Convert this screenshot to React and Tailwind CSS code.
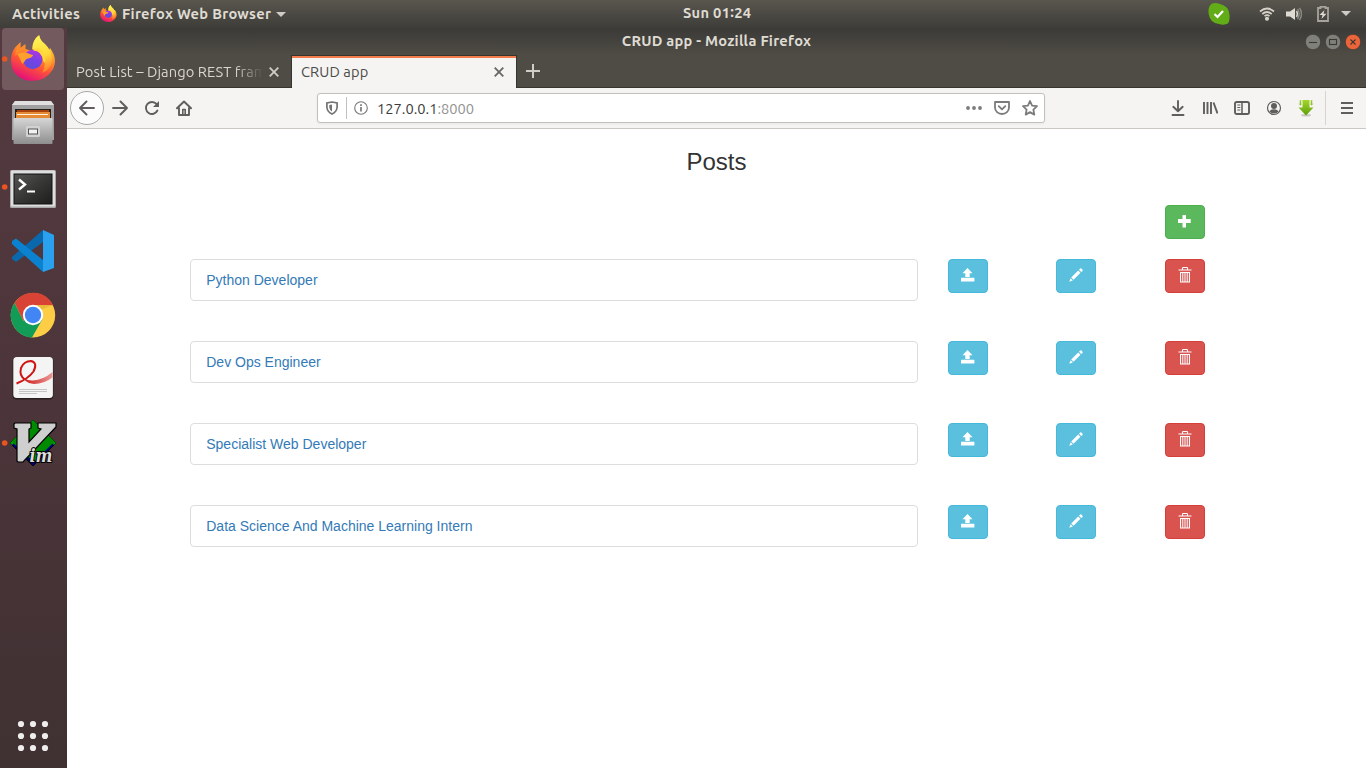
import React from "react";

const UI = "font-['Ubuntu','Noto_Sans',sans-serif]";

function FirefoxMark({ id, className, ...rest }) {
  return (
    <svg viewBox="0 0 46 46" className={className} {...rest}>
      <defs>
        <linearGradient id={id + "a"} x1="0.8" y1="0" x2="0.35" y2="1">
          <stop offset="0" stopColor="#fff44f" />
          <stop offset="0.35" stopColor="#ffa52a" />
          <stop offset="0.65" stopColor="#ff5536" />
          <stop offset="1" stopColor="#e3107a" />
        </linearGradient>
        <linearGradient id={id + "b"} x1="0.7" y1="0" x2="0.3" y2="1">
          <stop offset="0" stopColor="#b833e1" />
          <stop offset="0.5" stopColor="#7542e5" />
          <stop offset="1" stopColor="#5b4fd8" />
        </linearGradient>
        <linearGradient id={id + "c"} x1="0.4" y1="0" x2="0.6" y2="1">
          <stop offset="0" stopColor="#fff556" />
          <stop offset="0.55" stopColor="#ffd83a" />
          <stop offset="1" stopColor="#ff7d2b" />
        </linearGradient>
      </defs>
      <path d="M10 7 L10 13 L15 9 L15 14 L22 16 L23 8 Q25 2 29 0 Q30 6 35 9 L39 15 L40 13 Q48 24 43 34 Q36 46 23 46 Q8 46 2 34 Q-2 21 5 12 Q7 10 10 7Z" fill={`url(#${id}a)`} />
      <path d="M22 14 Q22 5 29 0 Q30 6 35 9 Q42 15 42 25 Q41 35 32 38 Q37 29 33 22 Q29 15 22 14Z" fill={`url(#${id}c)`} />
      <circle cx="22.5" cy="24.5" r="9.8" fill={`url(#${id}b)`} />
      <path d="M23 15.5 Q32 16 33 26 L35 28 Q36 17 29 13 Q25 12 23 15.5Z" fill="#ffd83a" />
      <path d="M7 19 Q13 16 17 18 Q21 20 23 20 Q22 23 16 24 Q14 27 12 29 Q10 25 7 19Z" fill="#ffa02c" />
      <path d="M10 7 L10 13 L15 9 L15 15 Q9 16 5 21 Q4 14 10 7Z" fill="#ff8b2b" />
    </svg>
  );
}

function DockCell({ running, children }) {
  return (
    <svg viewBox="0 0 67 64" className="block h-[64px] w-[67px] shrink-0">
      {children}
      {running && <circle cx="4.7" cy="31" r="2.8" fill="#e95420" />}
    </svg>
  );
}

function Dock() {
  return (
    <aside className="flex w-[67px] shrink-0 flex-col justify-between bg-linear-to-b from-[#543a40] via-[#4c353a] to-[#3f3132]">
      <div className="flex flex-col">
        <DockCell running>
          <rect x="2" y="0" width="62" height="62" rx="4" fill="#735a5f" />
          <FirefoxMark id="ffd" x="10.5" y="7" width="45.5" height="46" />
        </DockCell>
        <DockCell>
          <defs>
            <linearGradient id="cab" x1="0" y1="0" x2="0" y2="1">
              <stop offset="0" stopColor="#d6d6d6" />
              <stop offset="1" stopColor="#8e8e8e" />
            </linearGradient>
          </defs>
          <path d="M15 9h36l3 4v35H12V13z" fill="#a0a0a0" />
          <path d="M15 9h36l3 4H12z" fill="#e0e0e0" />
          <rect x="15" y="17" width="36" height="9" fill="#25201e" />
          <rect x="17" y="18" width="32" height="3" fill="#a8410c" />
          <rect x="16" y="20" width="34" height="6" fill="#e58a35" />
          <rect x="17" y="22" width="31" height="1" fill="#fff1df" />
          <rect x="13.5" y="26" width="39" height="26" rx="1" fill="url(#cab)" />
          <rect x="26" y="34" width="14" height="11" rx="1.5" fill="#d2d2d2" />
          <rect x="28.5" y="37" width="9" height="5" fill="#f2f2f2" stroke="#555" />
        </DockCell>
        <DockCell running>
          <defs>
            <linearGradient id="trm" x1="0" y1="0" x2="1" y2="1">
              <stop offset="0" stopColor="#555553" />
              <stop offset="0.5" stopColor="#373735" />
              <stop offset="1" stopColor="#1d1d1c" />
            </linearGradient>
          </defs>
          <rect x="10" y="14" width="46" height="38" rx="1.5" fill="#a8a8a8" />
          <rect x="11" y="14.5" width="44" height="36" rx="1" fill="#dedede" />
          <rect x="14" y="18" width="38" height="30" fill="url(#trm)" stroke="#111" />
          <path d="M19 23.5l6 5-6 5" fill="none" stroke="#fff" strokeWidth="2.4" />
          <path d="M27 35.5h8" stroke="#fff" strokeWidth="2" />
        </DockCell>
        <DockCell>
          <path d="M12 37l31-27v12L16 42l-4-3z" fill="#0a69ad" />
          <path d="M12 24v-3l4-2.5L43 40v12L12 24z" fill="#0b82cf" />
          <path d="M43 10l11 5v33l-11 4z" fill="#2aa1ef" />
        </DockCell>
        <DockCell>
          <circle cx="33" cy="31.2" r="22.2" fill="#fdce45" />
          <path d="M14.6 18.7A22.2 22.2 0 0 0 32 53.4L42.5 35 33 31 23.4 36.7z" fill="#119d58" />
          <path d="M14.6 18.7A22.2 22.2 0 0 1 53.2 21.3H33L23.4 36.7z" fill="#d94335" />
          <path d="M33 21.3h20l-14 5z" fill="#e9bb38" />
          <circle cx="33" cy="31" r="10.2" fill="#fff" />
          <circle cx="33" cy="31" r="8.2" fill="#4285f4" />
        </DockCell>
        <DockCell>
          <defs>
            <linearGradient id="pdf" x1="0" y1="0" x2="1" y2="0">
              <stop offset="0" stopColor="#cc0b0b" />
              <stop offset="1" stopColor="#e99a98" />
            </linearGradient>
          </defs>
          <rect x="12.5" y="9.5" width="41" height="42" rx="4" fill="#28201f" />
          <rect x="13.3" y="9" width="39.6" height="41" rx="3.5" fill="#f4f4f4" />
          <path d="M16.5 35.5Q28 31 33.500 23.500Q38 14.500 31 13Q24 13 21 20Q19 28 25 31.500" fill="none" stroke="#cf1414" strokeWidth="2" />
          <path d="M20.5 24Q23 33 33 32.500T52.500 24V29.500Q44 36 34 36T20.500 24z" fill="url(#pdf)" />
          <path d="M19 41.5h28M19 43.5h28M19 45.5h18" stroke="#c4c4c4" strokeWidth="1" />
        </DockCell>
        <DockCell running>
          <path d="M33 8L56 31 33 54 10 31z" fill="#000080" stroke="#000" />
          <path d="M33 8L56 31 54 33 33 12 12 33 10 31z" fill="#00a000" />
          <path d="M33 9L54 30 34 50 12 30z" fill="#008a00" />
          <path d="M15 11h16v5l-2 1v13l12-13-3-1v-5h18v4L23 50h-5l-1-1V17l-3-1v-4z" fill="#cfcfcf" stroke="#000" strokeWidth="1.2" />
          <text x="29.5" y="49.5" textLength="23" lengthAdjust="spacingAndGlyphs" fontFamily="DejaVu Serif" fontStyle="italic" fontWeight="700" fontSize="18" fill="#dcdcdc" stroke="#000" strokeWidth="2" paintOrder="stroke">im</text>
        </DockCell>
      </div>
      <svg viewBox="0 0 67 64" className="block h-[64px] w-[67px] fill-[#eeeeec]">
        {[20, 32, 44].map((y) => [21, 33, 45].map((x) => <circle key={x + "-" + y} cx={x} cy={y} r="3.1" />))}
      </svg>
    </aside>
  );
}

function TopBar() {
  return (
    <header className={`flex h-[28px] shrink-0 items-center bg-linear-to-b from-[#59564e] to-[#3e3d39] text-[14.667px] font-bold tracking-[0.29px] text-[#dfdbd2] ${UI}`}>
      <div className="flex w-[683px] items-center pl-[12px]">
        <span className="w-[68px] whitespace-nowrap">Activities</span>
        <FirefoxMark id="fft" className="mb-[2px] ml-[20px] h-[17px] w-[17px]" />
        <span className="ml-[5px] w-[149px] whitespace-nowrap">Firefox Web Browser</span>
        <svg className="ml-[5px] h-[5px] w-[10px] fill-[#cfccc5]" viewBox="0 0 10 5"><path d="M0 0h10L5 5z" /></svg>
      </div>
      <span className="mb-[2px] whitespace-nowrap leading-[22px]">Sun 01<span className="align-[1px] leading-none">:</span>24</span>
      <div className="mb-[1px] flex flex-1 items-center justify-end pr-[15px]">
        <svg className="h-[22px] w-[22px]" viewBox="0 0 22 22">
          <path d="M4 0.5Q8-.5 12 1Q21 3 21.5 12Q22 18 20 20.5Q16 22.5 11 21Q2 20 .7 11Q-.5 4 4 .5z" fill="#62ac17" />
          <path d="M6.5 11l3 3L15 8" fill="none" stroke="#fff" strokeWidth="2.2" />
        </svg>
        <svg className="ml-[29px] h-[14px] w-[16px]" viewBox="0 0 16 14" fill="none" stroke="#d5d1c9" strokeWidth="1.7">
          <path d="M1 4.5Q8-1.5 15 4.5M3.3 7Q8 3 12.7 7M5.5 9.2Q8 7.2 10.5 9.2" />
          <circle cx="8" cy="11.7" r="1.2" fill="#dfdbd2" />
        </svg>
        <svg className="ml-[11px] h-[14px] w-[16px]" viewBox="0 0 16 14" fill="none" stroke="#8a8780" strokeWidth="1.5">
          <path d="M0 4.5h4L9 1v12L4 9.5H0z" fill="#dfdbd2" stroke="none" />
          <path d="M10.5 4Q12.3 7 10.5 10" stroke="#d5d1c9" />
          <path d="M11.5 2Q14.8 7 11.5 12M13.5.8Q17.5 7 13.5 13.2" />
        </svg>
        <svg className="ml-[15px] h-[16px] w-[12px]" viewBox="0 0 12 16">
          <path d="M3.5 2V.8h5V2h2.5v13H1V2z" fill="none" stroke="#a6a39b" strokeWidth="1.8" />
          <path d="M7.5 4L2.5 9h3l-1 4L9.5 7.8h-3z" fill="#dfdbd2" />
        </svg>
        <svg className="ml-[12px] h-[5px] w-[10px] fill-[#cfccc5]" viewBox="0 0 10 5"><path d="M0 0h10L5 5z" /></svg>
      </div>
    </header>
  );
}

function WindowButton({ close, children }) {
  return (
    <svg viewBox="0 0 16 16" className="h-[16px] w-[16px]">
      <circle cx="8" cy="8" r="7.7" fill={close ? "#ec643a" : "#80807a"} stroke="#343330" strokeWidth="0.6" />
      <g fill="none" stroke="#393834" strokeWidth="1.1">{children}</g>
    </svg>
  );
}

function TitleBar() {
  return (
    <div className={`flex h-[27px] items-center bg-linear-to-b from-[#3b3a37] to-[#4f4c45] text-[14.667px] font-bold tracking-[0.24px] text-[#dfdbd2] ${UI}`}>
      <div className="flex-1" />
      <span className="mb-[2px] whitespace-nowrap">CRUD app - Mozilla Firefox</span>
      <div className="flex min-w-0 flex-1 justify-end">
        <div className="flex gap-[4px] pr-[5px]">
          <WindowButton><path d="M4 8.5h8" /></WindowButton>
          <WindowButton><rect x="4.5" y="5.5" width="7" height="5" /></WindowButton>
          <WindowButton close><path d="M5.5 5.5l5 5M10.5 5.5l-5 5" /></WindowButton>
        </div>
      </div>
    </div>
  );
}

function Cross({ className }) {
  return <svg viewBox="0 0 10 10" className={`h-[10px] w-[10px] shrink-0 ${className}`} fill="none" strokeWidth="1.8"><path d="M.7.7l8.6 8.6M9.3.7L.7 9.3" /></svg>;
}

function Tabs() {
  return (
    <div className={`flex h-[33px] bg-[#4f4c45] text-[14.667px] tracking-[0.1px] ${UI}`}>
      <div className="flex w-[224px] items-center border-b border-[#35342f] pl-[9px] text-[#dad6cd]">
        <div className="mt-[1px] w-[187px] whitespace-nowrap mask-r-from-85% mask-r-to-100%">Post List – Django REST fram</div>
        <Cross className="mt-[1px] ml-[6px] stroke-[#d0cdc5]" />
      </div>
      <div className="flex w-[226px] items-center border-x border-t border-[#35342f] bg-[#f5f4f2] shadow-[inset_0_2px_0_#f37b4c]">
        <span className="ml-[9px] flex-1 text-[#4c4b48]">CRUD app</span>
        <Cross className="mr-[12px] stroke-[#676664]" />
      </div>
      <div className="flex flex-1 items-center border-b border-[#35342f] pl-[9px]">
        <svg viewBox="0 0 14 14" className="h-[14px] w-[14px] stroke-[#d0cdc5]" strokeWidth="2"><path d="M0 7h14M7 0v14" /></svg>
      </div>
    </div>
  );
}

function Tool({ children, className = "w-[32px]" }) {
  return (
    <div className={`flex shrink-0 justify-center ${className}`}>
      <svg viewBox="0 0 16 16" className="h-[16px] w-[16px]" fill="none" stroke="#5f5e5c" strokeWidth="1.9" strokeLinecap="round" strokeLinejoin="round">{children}</svg>
    </div>
  );
}

function Toolbar() {
  return (
    <div className="flex h-[41px] items-center border-b border-[#cbc8c4] bg-[#f5f4f2] pl-[3px]">
      <div className="flex h-[34px] w-[34px] items-center justify-center rounded-full border border-[#aaa8a5] bg-[#fcfcfc]">
        <Tool><path d="M15 8H1M7.5 1.5L1 8l6.5 6.5" /></Tool>
      </div>
      <Tool><path d="M1 8h14M8.5 1.5L15 8l-6.5 6.5" /></Tool>
      <Tool>
        <path d="M13.4 10.5A6 6 0 1 1 12.6 4.2" />
        <path d="M15 1v6H9z" fill="#5f5e5c" stroke="none" />
      </Tool>
      <Tool><path d="M1 8.3L8 1.5l7 6.8M3 8v7h10V8" /><path d="M6.8 14V9.5h2.4V14" strokeWidth="1.6" /></Tool>
      <div className={`ml-[117px] flex h-[30px] w-[728px] items-center rounded-[3px] border border-[#c3c0bc] bg-white text-[14.667px] shadow-[0_1px_3px_rgba(0,0,0,0.05)] ${UI}`}>
        <svg viewBox="0 0 12 14" className="ml-[8px] h-[14px] w-[12px]" fill="none" stroke="#737373" strokeWidth="1.7">
          <path d="M6 1L11.1 2v4.5Q10.5 11 6 13Q1.5 11 .9 6.5V2z" />
          <path d="M6 3.5V10.5Q3.5 9 3.3 6.5V4z" fill="#737373" stroke="none" />
        </svg>
        <div className="ml-[8px] h-[22px] w-px bg-[#c3c0bc]" />
        <svg viewBox="0 0 14 14" className="ml-[7px] h-[14px] w-[14px]" fill="none" stroke="#777" strokeWidth="1.1">
          <circle cx="7" cy="7" r="6.3" /><path d="M7 6v4.5M7 3.2v1.7" strokeWidth="1.7" />
        </svg>
        <span className="mt-[1px] ml-[9px] flex-1 text-[#3c3c3c]">127.0.0.1<span className="text-[#929292]">:8000</span></span>
        <svg viewBox="0 0 16 4" className="h-[4px] w-[16px] fill-[#7b7b7b]"><circle cx="2" cy="2" r="1.9" /><circle cx="8" cy="2" r="1.9" /><circle cx="14" cy="2" r="1.9" /></svg>
        <svg viewBox="0 0 16 14" className="ml-[12px] h-[14px] w-[16px]" fill="none" stroke="#7b7b7b" strokeWidth="1.8" strokeLinecap="round" strokeLinejoin="round">
          <path d="M1 1h14v5.5a7 6.5 0 0 1-14 0zM4.7 5.2L8 8.3l3.3-3.1" />
        </svg>
        <svg viewBox="0 0 16 16" className="mr-[6px] ml-[12px] h-[16px] w-[16px]" fill="none" stroke="#7b7b7b" strokeWidth="1.8" strokeLinejoin="round">
          <path d="M8 1l2.1 4.6 4.9.6-3.6 3.4.9 5L8 12.1l-4.3 2.5.9-5L1 6.2l4.9-.6z" />
        </svg>
      </div>
      <div className="flex-1" />
      <Tool><path d="M8 1v10M3.3 6.8L8 11.3l4.700-4.500M2.500 15h11" /></Tool>
      <Tool><path d="M2 2v12M5.500 2v12M9 2v12M11.500 2.500l4 11" strokeLinecap="butt" /></Tool>
      <Tool><rect x="1" y="2" width="14" height="12" rx="1.8" /><path d="M8 2v12" strokeWidth="1.5" /><path d="M3.3 5h3M3.3 7.5h3M3.3 10h3" strokeWidth="1" strokeLinecap="butt" /></Tool>
      <Tool><circle cx="8" cy="8" r="6.5" strokeWidth="1.2" /><circle cx="8" cy="6" r="3" fill="#5f5e5c" stroke="none" /><path d="M3.3 11.2Q5 9.3 8 9.3t4.7 1.9Q11 13.5 8 13.5t-4.7-2.3z" fill="#5f5e5c" stroke="none" /></Tool>
      <div className="flex w-[32px] justify-center">
        <svg viewBox="0 0 16 17" className="h-[17px] w-[16px]">
          <defs><linearGradient id="dl" x1="0" y1="0" x2="0" y2="1"><stop offset="0" stopColor="#a5d72c" /><stop offset="1" stopColor="#5c9d0b" /></linearGradient></defs>
          <ellipse cx="8" cy="15.3" rx="5" ry="1.2" fill="#c9c8c5" />
          <path d="M4.5 0h7v7.500H15.500L8 15.500.5 7.500h4z" fill="url(#dl)" />
          <path d="M1.500 0h2v3.500h1L2.500 6 .3 3.500h1.200zM12.500 0h2v3.500h1.200L13.500 6l-2-2.500h1z" fill="#8fc42c" stroke="#f5f4f2" strokeWidth="0.5" />
        </svg>
      </div>
      <div className="ml-[3px] h-[34px] w-px bg-[#d7d4d0]" />
      <div className="flex w-[40px] justify-center pl-[2px]">
        <svg viewBox="0 0 12 12" className="h-[12px] w-[12px]" stroke="#5f5e5c" strokeWidth="2"><path d="M0 1h12M0 6h12M0 11h12" /></svg>
      </div>
    </div>
  );
}

function ActionButton({ tone, children }) {
  return (
    <button className={`flex h-[34px] w-[40px] justify-center rounded-[4px] border pt-[8px] ${tone}`}>
      <svg viewBox="0 0 14 14" className="h-[14px] w-[14px] overflow-visible fill-white">{children}</svg>
    </button>
  );
}

const INFO = "bg-[#5bc0de] border-[#46b8da]";
const DANGER = "bg-[#d9534f] border-[#d43f3a]";
const SUCCESS = "bg-[#5cb85c] border-[#4cae4c]";

const posts = ["Python Developer", "Dev Ops Engineer", "Specialist Web Developer", "Data Science And Machine Learning Intern"];

function PostRow({ title }) {
  return (
    <div className="mb-[40px] grid h-[42px] grid-cols-12">
      <div className="col-span-7 col-start-2 px-[15px]">
        <div className="flex h-[42px] items-center rounded-[4px] border border-[#ddd] bg-white px-[15px]">
          <a className="text-[#337ab7]">{title}</a>
        </div>
      </div>
      <div className="px-[15px]">
        <ActionButton tone={INFO}><path d="M6.5 0l5 5.2H8.7V9H4.3V5.2H1.5zM.5 9.7h12.4q.5 0 .5.5v3.3H0v-3.3q0-.5.5-.5z" /></ActionButton>
      </div>
      <div className="px-[15px]">
        <ActionButton tone={INFO}><path d="M11.2.5Q11.8 0 12.4.5l1.1 1.2q.5.6 0 1.2L12.3 4 10 1.7zM9.2 2.500l2.300 2.300-7 7L2.200 9.500zM1.600 10.300l2.200 2.200L.3 13.700z" /></ActionButton>
      </div>
      <div className="px-[15px]">
        <ActionButton tone={DANGER}>
          <path d="M4.5 1.500V.2q0-.7.7-.7h3.600q.7 0 .7.7V1.500M.5 2h13" fill="none" stroke="#fff" strokeWidth="1.100" />
          <path d="M2 4h10v10.500H2zM3.100 5v8.500h1.200V5zM5.300 5v8.500h1.200V5zM7.500 5v8.500h1.200V5zM9.700 5v8.500h1.200V5z" fillRule="evenodd" />
        </ActionButton>
      </div>
    </div>
  );
}

function Page() {
  return (
    <main className="flex-1 bg-white pt-[20px] font-['Liberation_Sans',Arial,sans-serif] text-[14px] leading-[20px] text-[#333]">
      <h3 className="text-center text-[24px] leading-[26px]">Posts</h3>
      <div className="mt-[30px] mb-[20px] grid grid-cols-12">
        <div className="col-start-11 px-[15px]">
          <ActionButton tone={SUCCESS}><path d="M4.500 1h3.500v4h4.700v4H8v4.500H4.500V9H0V5h4.500z" /></ActionButton>
        </div>
      </div>
      {posts.map((p) => <PostRow key={p} title={p} />)}
    </main>
  );
}

export default function App() {
  return (
    <div className="flex h-[768px] w-[1366px] flex-col overflow-hidden">
      <TopBar />
      <div className="flex min-h-0 flex-1">
        <Dock />
        <div className="flex min-w-0 flex-1 flex-col">
          <TitleBar />
          <Tabs />
          <Toolbar />
          <Page />
        </div>
      </div>
    </div>
  );
}
